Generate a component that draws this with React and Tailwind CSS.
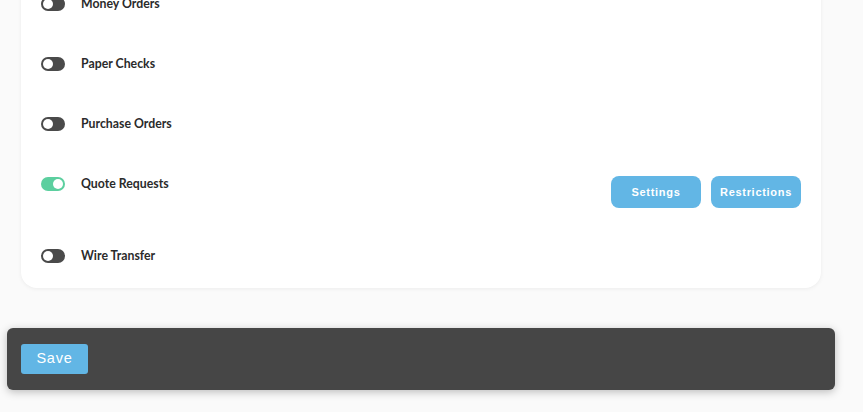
import React from "react";

function Toggle({ on }) {
  return (
    <div
      className={
        "relative h-[14px] w-[24px] shrink-0 rounded-full " +
        (on ? "bg-[#5ccf9f]" : "bg-[#4a4a4a]")
      }
    >
      <div
        className={
          "absolute top-[2px] h-[10px] w-[10px] rounded-full bg-white " +
          (on ? "right-[2px]" : "left-[2px]")
        }
      />
    </div>
  );
}

function Label({ on, text }) {
  return (
    <div className="flex h-[20px] items-center gap-[16px]">
      <Toggle on={on} />
      <span className="text-[12.3px] font-bold text-[#2b2b2b] [font-family:Lato,'Noto_Sans',sans-serif]">
        {text}
      </span>
    </div>
  );
}

function ActionButton({ children }) {
  return (
    <button className="h-[32px] w-[90px] rounded-[8px] bg-[#62b6e5] text-[11px] font-bold tracking-[0.7px] text-white [font-family:'Liberation_Sans',Arial,sans-serif]">
      {children}
    </button>
  );
}

export default function App() {
  return (
    <div className="min-h-[412px] w-full overflow-hidden bg-[#fafafa]">
      <div className="-mt-[40px] flex flex-col">
        <div className="ml-[21px] w-[800px] rounded-[16px] bg-white px-[20px] pt-[34px] pb-[22px] shadow-[0_1px_4px_rgba(0,0,0,0.06)]">
          <Label text="Money Orders" />
          <div className="mt-[40px]">
            <Label text="Paper Checks" />
          </div>
          <div className="mt-[40px]">
            <Label text="Purchase Orders" />
          </div>
          <div className="mt-[40px] flex items-start justify-between">
            <Label on text="Quote Requests" />
            <div className="mt-[2px] flex gap-[10px]">
              <ActionButton>Settings</ActionButton>
              <ActionButton>Restrictions</ActionButton>
            </div>
          </div>
          <div className="mt-[38px]">
            <Label text="Wire Transfer" />
          </div>
        </div>
        <div className="mt-[40px] ml-[7px] flex h-[62px] w-[828px] items-center rounded-[6px] bg-[#464646] px-[14px] shadow-[0_2px_8px_rgba(0,0,0,0.25)]">
          <button className="h-[30px] w-[67px] rounded-[3px] bg-[#62b6e5] text-[14.5px] tracking-[0.8px] text-white [font-family:'Liberation_Sans',Arial,sans-serif]">
            Save
          </button>
        </div>
      </div>
    </div>
  );
}
